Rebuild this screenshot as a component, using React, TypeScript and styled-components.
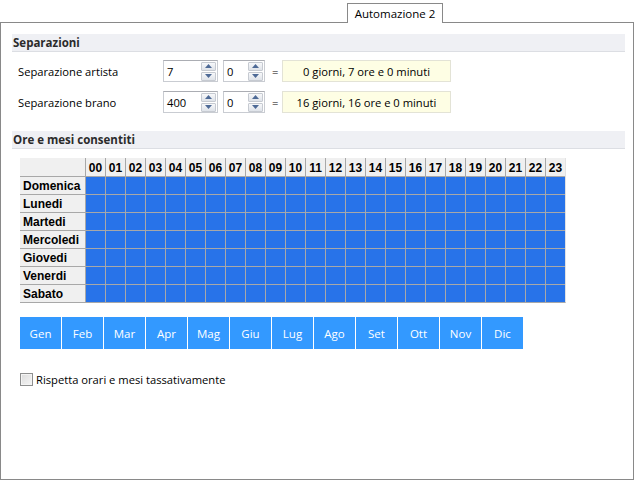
import React from 'react';
import styled, { createGlobalStyle } from 'styled-components';

const GlobalStyle = createGlobalStyle`
  html, body {
    margin: 0;
    padding: 0;
    background: #ffffff;
  }
  body {
    font-family: "Open Sans", "Noto Sans", Arial, sans-serif;
    font-size: 11.2px;
    color: #000;
  }
`;

const hours = Array.from({ length: 24 }, (_, i) => String(i).padStart(2, '0'));
const days = ['Domenica', 'Lunedi', 'Martedi', 'Mercoledi', 'Giovedi', 'Venerdi', 'Sabato'];
const months = ['Gen', 'Feb', 'Mar', 'Apr', 'Mag', 'Giu', 'Lug', 'Ago', 'Set', 'Ott', 'Nov', 'Dic'];

const separations = [
  { label: 'Separazione artista', value: '7', extra: '0', result: '0 giorni, 7 ore e 0 minuti' },
  { label: 'Separazione brano', value: '400', extra: '0', result: '16 giorni, 16 ore e 0 minuti' },
];

const Page = styled.div`
  width: 634px;
  height: 480px;
  display: flex;
  flex-direction: column;
  box-sizing: border-box;
`;

const TabStrip = styled.div`
  height: 22px;
  display: flex;
  align-items: flex-end;
  padding-left: 347px;
`;

const Tab = styled.div`
  position: relative;
  z-index: 1;
  width: 96px;
  height: 20px;
  box-sizing: border-box;
  border: 1px solid #898989;
  border-bottom: none;
  background: #fff;
  margin-bottom: -1px;
  display: flex;
  align-items: center;
  justify-content: center;
  font-size: 11.5px;
  padding-bottom: 1px;
`;

const Panel = styled.div`
  flex: 1;
  border: 1px solid #898989;
  background: #fff;
  padding: 11px 8px 0 11px;
  display: flex;
  flex-direction: column;
`;

const SectionBar = styled.div<{ $top?: number }>`
  height: 17px;
  margin-top: ${(p) => p.$top ?? 0}px;
  background: #eff0f4;
  border-bottom: 1px solid #dcdee3;
  display: flex;
  align-items: center;
  padding-left: 1px;
  font-weight: 700;
  font-size: 11.5px;
  color: #2b2b2b;
`;

const FormRows = styled.div`
  display: flex;
  flex-direction: column;
  gap: 9px;
  margin-top: 8px;
  padding-left: 6px;
`;

const FormRow = styled.div`
  display: flex;
  align-items: center;
  height: 22px;
`;

const FieldLabel = styled.div`
  width: 145px;
`;

const SpinBox = styled.div<{ $width: number }>`
  width: ${(p) => p.$width}px;
  height: 22px;
  box-sizing: border-box;
  border: 1px solid #c9ccd2;
  border-top-color: #abadb3;
  display: flex;
  align-items: center;
  justify-content: space-between;
  padding: 0 1px 0 3px;
  margin-right: 5px;
`;

const SpinButtons = styled.div`
  display: flex;
  flex-direction: column;
  gap: 1px;
`;

const SpinButton = styled.div`
  width: 15px;
  height: 9px;
  box-sizing: border-box;
  border: 1px solid #c6cad1;
  border-radius: 1px;
  background: linear-gradient(#f7f8fa, #dfe3e9);
  display: flex;
  align-items: center;
  justify-content: center;
`;

const Equals = styled.div`
  width: 10px;
  padding-left: 2px;
`;

const ResultBox = styled.div`
  width: 169px;
  height: 22px;
  box-sizing: border-box;
  border: 1px solid #e3e3d6;
  background: #fefee4;
  display: flex;
  align-items: center;
  justify-content: center;
`;

const HourGrid = styled.div`
  margin: 9px 0 0 8px;
  display: grid;
  grid-template-columns: 65px repeat(24, 19px);
  grid-template-rows: 18px repeat(7, 17px);
  gap: 1px;
  background: #a8a8a8;
  width: max-content;
  border-right: 1px solid #e2e2e2;
  border-bottom: 1px solid #a8a8a8;
  font-family: "Liberation Sans", Arial, sans-serif;
  font-weight: 700;
  font-size: 12px;
`;

const HeadCell = styled.div`
  background: #f0f0f0;
  display: flex;
  align-items: center;
  justify-content: center;
  padding-top: 1px;
  color: #000;
`;

const DayCell = styled.div`
  background: #f0f0f0;
  display: flex;
  align-items: center;
  padding-left: 3px;
`;

const SlotCell = styled.div<{ $on: boolean }>`
  background: ${(p) => (p.$on ? '#2873e9' : '#ffffff')};
`;

const MonthRow = styled.div`
  margin: 14px 0 0 8px;
  display: flex;
  gap: 1px;
`;

const MonthButton = styled.div`
  width: 41px;
  height: 32px;
  background: #3399ff;
  color: #fff;
  font-size: 11.5px;
  display: flex;
  align-items: center;
  justify-content: center;
`;

const CheckRow = styled.label`
  margin: 23px 0 0 8px;
  display: flex;
  align-items: center;
  gap: 3px;
`;

const CheckBox = styled.span`
  width: 13px;
  height: 13px;
  box-sizing: border-box;
  border: 1px solid #8e8f8f;
  background: linear-gradient(135deg, #dcdcdc, #f6f6f6);
  box-shadow: inset 0 0 0 1px #f4f4f4;
`;

const Arrow = ({ up }: { up: boolean }) => (
  <svg width="7" height="4" viewBox="0 0 7 4">
    <path d={up ? 'M0 4 L3.5 0 L7 4 Z' : 'M0 0 L3.5 4 L7 0 Z'} fill="#4e6a96" />
  </svg>
);

const Spinner = ({ value, width }: { value: string; width: number }) => (
  <SpinBox $width={width}>
    <span>{value}</span>
    <SpinButtons>
      <SpinButton><Arrow up /></SpinButton>
      <SpinButton><Arrow up={false} /></SpinButton>
    </SpinButtons>
  </SpinBox>
);

const App = () => {
  return (
    <Page>
      <GlobalStyle />
      <TabStrip>
        <Tab>Automazione 2</Tab>
      </TabStrip>
      <Panel>
        <SectionBar>Separazioni</SectionBar>
        <FormRows>
          {separations.map((s) => (
            <FormRow key={s.label}>
              <FieldLabel>{s.label}</FieldLabel>
              <Spinner value={s.value} width={55} />
              <Spinner value={s.extra} width={42} />
              <Equals>=</Equals>
              <ResultBox>{s.result}</ResultBox>
            </FormRow>
          ))}
        </FormRows>

        <SectionBar $top={18}>Ore e mesi consentiti</SectionBar>
        <HourGrid>
          <HeadCell />
          {hours.map((h) => (
            <HeadCell key={h}>{h}</HeadCell>
          ))}
          {days.map((d) => (
            <React.Fragment key={d}>
              <DayCell>{d}</DayCell>
              {hours.map((h) => (
                <SlotCell key={h} $on />
              ))}
            </React.Fragment>
          ))}
        </HourGrid>

        <MonthRow>
          {months.map((m) => (
            <MonthButton key={m}>{m}</MonthButton>
          ))}
        </MonthRow>

        <CheckRow>
          <CheckBox />
          Rispetta orari e mesi tassativamente
        </CheckRow>
      </Panel>
    </Page>
  );
};

export default App;
